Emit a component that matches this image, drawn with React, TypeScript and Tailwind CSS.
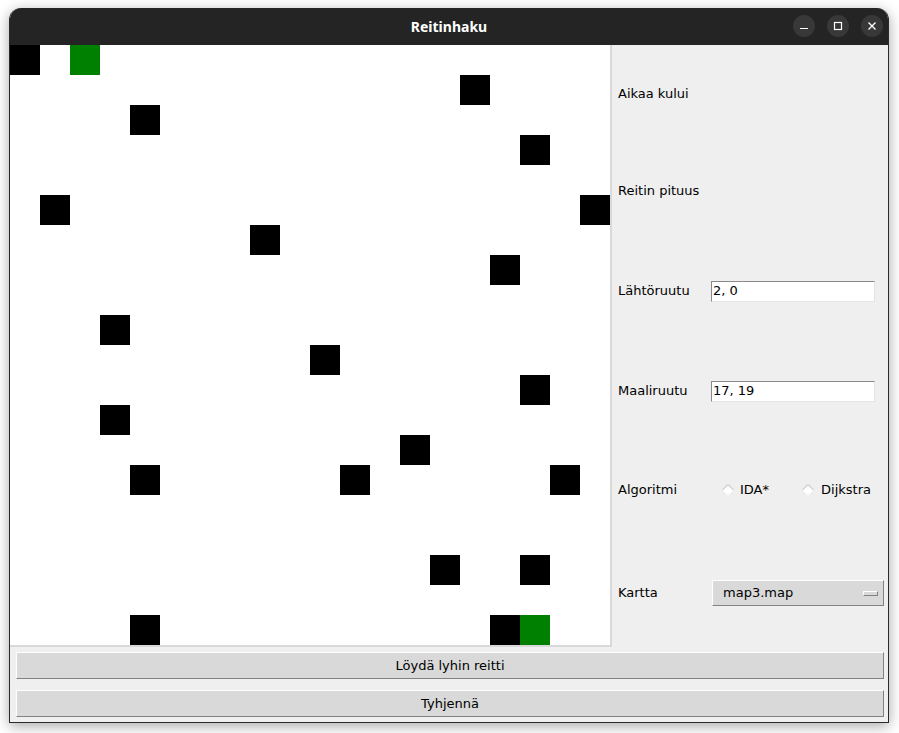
const WALLS: [number, number][] = [
  [0, 0], [15, 1], [4, 2], [17, 3], [1, 5], [19, 5], [8, 6], [16, 7],
  [3, 9], [10, 10], [17, 11], [3, 12], [13, 13], [4, 14], [11, 14], [18, 14],
  [14, 17], [17, 17], [4, 19], [16, 19],
]
const GOALS: [number, number][] = [[2, 0], [17, 19]]

const has = (list: [number, number][], x: number, y: number) =>
  list.some(([a, b]) => a === x && b === y)

function Diamond() {
  return (
    <svg width="12" height="12" viewBox="0 0 12 12" className="shrink-0">
      <polygon points="6,0.5 11.5,6 6,11.5 0.5,6" fill="#ffffff" />
      <polyline points="0.5,6 6,0.5 11.5,6" fill="none" stroke="#b0b0b0" strokeWidth="1" />
    </svg>
  )
}

function TkButton({ label }: { label: string }) {
  return (
    <div className="flex h-[27px] items-center justify-center border border-t-white border-l-white border-b-[#828282] border-r-[#828282] bg-[#d9d9d9] text-[13px] text-black">
      {label}
    </div>
  )
}

export default function App() {
  const cells = []
  for (let y = 0; y < 20; y++) {
    for (let x = 0; x < 20; x++) {
      const bg = has(GOALS, x, y) ? 'bg-[#008000]' : has(WALLS, x, y) ? 'bg-black' : 'bg-white'
      cells.push(<div key={`${x}-${y}`} className={`h-[30px] w-[30px] ${bg}`}></div>)
    }
  }

  return (
    <div className="h-[733px] w-[899px] bg-white pl-[9px] pt-[8px] font-['DejaVu_Sans',sans-serif]">
      <div className="flex h-[715px] w-[880px] flex-col overflow-hidden rounded-t-[12px] border-x border-b border-[#2a2a2a] bg-[#efefef] shadow-[0_3px_14px_rgba(0,0,0,0.35)]">
        {/* title bar */}
        <div className="relative flex h-[37px] shrink-0 items-center justify-center bg-[#242424]">
          <span className="font-['Noto_Sans',sans-serif] text-[14px] font-bold text-white">Reitinhaku</span>
          <div className="absolute right-[5px] top-[7px] flex gap-[12px]">
            <div className="flex h-[22px] w-[22px] items-center justify-center rounded-full bg-[#383838]">
              <svg width="10" height="10" viewBox="0 0 10 10">
                <line x1="1" y1="7.5" x2="9" y2="7.5" stroke="white" strokeWidth="1.2" />
              </svg>
            </div>
            <div className="flex h-[22px] w-[22px] items-center justify-center rounded-full bg-[#383838]">
              <svg width="10" height="10" viewBox="0 0 10 10">
                <rect x="1.5" y="1.5" width="7" height="7" fill="none" stroke="white" strokeWidth="1.2" />
              </svg>
            </div>
            <div className="flex h-[22px] w-[22px] items-center justify-center rounded-full bg-[#383838]">
              <svg width="10" height="10" viewBox="0 0 10 10">
                <path d="M1.5 1.5 L8.5 8.5 M8.5 1.5 L1.5 8.5" stroke="white" strokeWidth="1.3" />
              </svg>
            </div>
          </div>
        </div>

        <div className="flex">
          {/* map canvas */}
          <div className="border-b-2 border-r-2 border-[#d9d9d9]">
            <div className="grid grid-cols-[repeat(20,30px)]">{cells}</div>
          </div>

          {/* side panel */}
          <div className="flex flex-1 flex-col pl-[6px] text-[13px] text-black">
            <div className="flex h-[97px] items-center">Aikaa kului</div>
            <div className="flex h-[98px] items-center">Reitin pituus</div>
            <div className="flex h-[102px] items-center">
              <span className="w-[93px]">Lähtöruutu</span>
              <div className="flex h-[21px] w-[164px] items-center border border-t-[#8a8a8a] border-l-[#8a8a8a] border-b-[#e4e4e4] border-r-[#e4e4e4] bg-white pl-[1px]">2, 0</div>
            </div>
            <div className="flex h-[98px] items-center">
              <span className="w-[93px]">Maaliruutu</span>
              <div className="flex h-[21px] w-[164px] items-center border border-t-[#8a8a8a] border-l-[#8a8a8a] border-b-[#e4e4e4] border-r-[#e4e4e4] bg-white pl-[1px]">17, 19</div>
            </div>
            <div className="flex h-[100px] items-center">
              <span className="w-[104px]">Algoritmi</span>
              <div className="flex items-center gap-[6px]">
                <Diamond />
                <span>IDA*</span>
              </div>
              <div className="ml-[33px] flex items-center gap-[7px]">
                <Diamond />
                <span>Dijkstra</span>
              </div>
            </div>
            <div className="flex h-[106px] items-center">
              <span className="w-[94px]">Kartta</span>
              <div className="flex h-[26px] w-[172px] items-center justify-between border border-t-white border-l-white border-b-[#828282] border-r-[#828282] bg-[#d9d9d9] pl-[10px] pr-[5px]">
                <span>map3.map</span>
                <div className="h-[5px] w-[15px] border border-t-white border-l-white border-b-[#828282] border-r-[#828282] bg-[#d9d9d9]"></div>
              </div>
            </div>
          </div>
        </div>

        {/* buttons */}
        <div className="flex flex-col gap-[11px] pl-[6px] pr-[4px] pt-[5px]">
          <TkButton label="Löydä lyhin reitti" />
          <TkButton label="Tyhjennä" />
        </div>
      </div>
    </div>
  )
}
